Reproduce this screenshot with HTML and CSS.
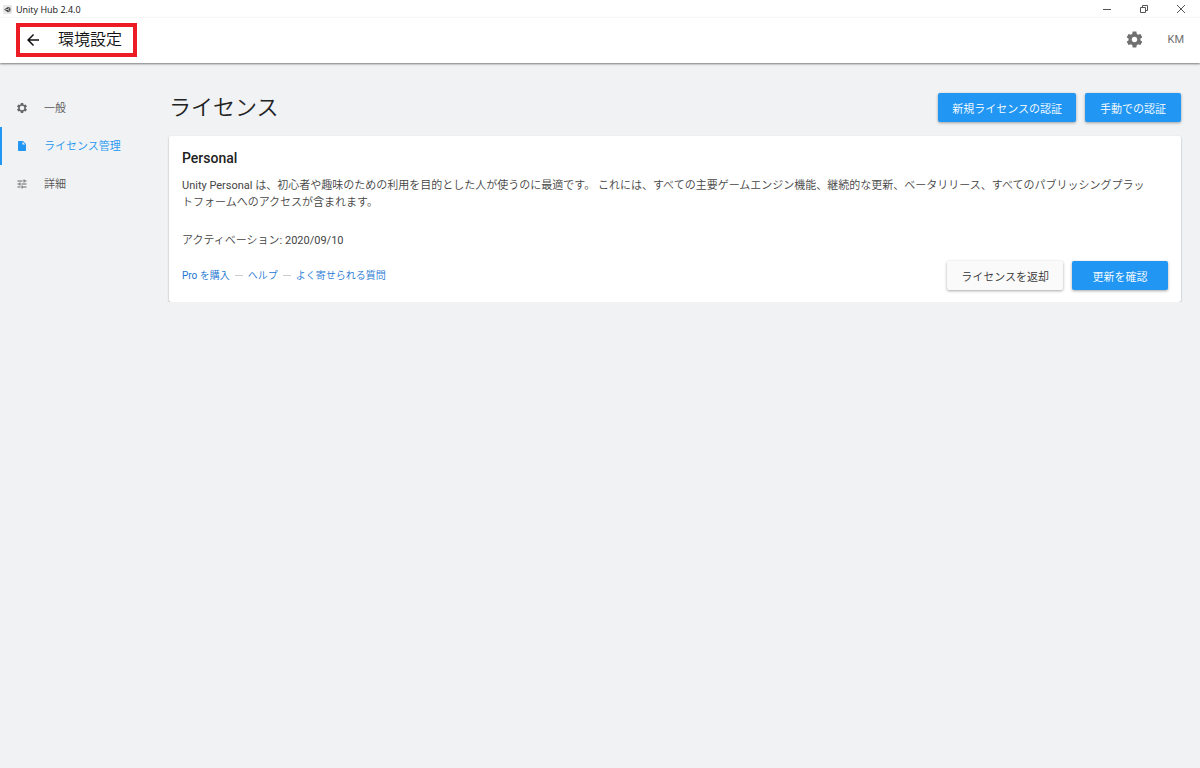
FILE: index.html
```html
<!DOCTYPE html>
<html lang="ja">
<head>
    <meta charset="UTF-8">
    <meta name="viewport" content="width=device-width, initial-scale=1.0">
    <title>Unity Hub 2.4.0</title>
    <link rel="stylesheet" href="styles.css">
</head>
<body>

    <!-- Title bar -->
    <div class="titlebar">
        <svg class="app-icon" viewBox="0 0 24 24">
            <rect width="24" height="24" rx="2" fill="#e8e8e8"/>
            <path d="M3 12 13 5l6 1 1 6-1 6-6 1z" fill="#444"/>
            <path d="M7 12h7M14 12l3-6M14 12l3 6" stroke="#e8e8e8" stroke-width="2"/>
        </svg>
        <span class="app-name">Unity Hub 2.4.0</span>
        <div class="window-controls">
            <button type="button" aria-label="最小化">
                <svg viewBox="0 0 10 10"><path d="M1 5.5h8"/></svg>
            </button>
            <button type="button" aria-label="元に戻す">
                <svg viewBox="0 0 10 10"><path d="M1.5 3.5h5v5h-5zM3.5 3V1.5h5v5H7"/></svg>
            </button>
            <button type="button" aria-label="閉じる">
                <svg viewBox="0 0 10 10"><path d="M1 1l8 8M9 1l-8 8"/></svg>
            </button>
        </div>
    </div>

    <!-- Header -->
    <header class="header">
        <div class="back-box">
            <button type="button" class="back-btn" aria-label="戻る">
                <svg viewBox="0 0 24 24"><path d="M20 11H7.83l5.59-5.59L12 4l-8 8 8 8 1.41-1.41L7.83 13H20v-2z"/></svg>
            </button>
            <span class="header-title">環境設定</span>
        </div>
        <div class="header-right">
            <button type="button" class="gear-btn" aria-label="設定">
                <svg viewBox="0 0 24 24"><path d="M19.43 12.98c.04-.32.07-.64.07-.98s-.03-.66-.07-.98l2.11-1.65c.19-.15.24-.42.12-.64l-2-3.46c-.12-.22-.39-.3-.61-.22l-2.49 1c-.52-.4-1.08-.73-1.69-.98l-.38-2.65C14.46 2.18 14.25 2 14 2h-4c-.25 0-.46.18-.49.42l-.38 2.65c-.61.25-1.17.59-1.69.98l-2.49-1c-.23-.09-.49 0-.61.22l-2 3.46c-.13.22-.07.49.12.64l2.11 1.65c-.04.32-.07.65-.07.98s.03.66.07.98l-2.11 1.65c-.19.15-.24.42-.12.64l2 3.46c.12.22.39.3.61.22l2.49-1c.52.4 1.08.73 1.69.98l.38 2.65c.03.24.24.42.49.42h4c.25 0 .46-.18.49-.42l.38-2.65c.61-.25 1.17-.59 1.69-.98l2.49 1c.23.09.49 0 .61-.22l2-3.46c.12-.22.07-.49-.12-.64l-2.11-1.65zM12 15.5c-1.93 0-3.5-1.57-3.5-3.5s1.57-3.5 3.5-3.5 3.5 1.57 3.5 3.5-1.57 3.5-3.5 3.5z"/></svg>
            </button>
            <button type="button" class="user-btn">KM</button>
        </div>
    </header>

    <div class="layout">
        <!-- Sidebar -->
        <nav class="sidebar">
            <a href="#general">
                <svg viewBox="0 0 24 24"><path fill-rule="evenodd" d="M19.43 12.98c.04-.32.07-.64.07-.98s-.03-.66-.07-.98l2.11-1.65c.19-.15.24-.42.12-.64l-2-3.46c-.12-.22-.39-.3-.61-.22l-2.49 1c-.52-.4-1.08-.73-1.69-.98l-.38-2.65C14.46 2.18 14.25 2 14 2h-4c-.25 0-.46.18-.49.42l-.38 2.65c-.61.25-1.17.59-1.69.98l-2.49-1c-.23-.09-.49 0-.61.22l-2 3.46c-.13.22-.07.49.12.64l2.11 1.65c-.04.32-.07.65-.07.98s.03.66.07.98l-2.11 1.65c-.19.15-.24.42-.12.64l2 3.46c.12.22.39.3.61.22l2.49-1c.52.4 1.08.73 1.69.98l.38 2.65c.03.24.24.42.49.42h4c.25 0 .46-.18.49-.42l.38-2.65c.61-.25 1.17-.59 1.69-.98l2.49 1c.23.09.49 0 .61-.22l2-3.46c.12-.22.07-.49-.12-.64l-2.11-1.65zM12 16.6a4.6 4.6 0 1 1 0-9.2 4.6 4.6 0 0 1 0 9.2z"/></svg>
                一般
            </a>
            <a href="#license" class="active">
                <svg viewBox="0 0 24 24"><path d="M6 2c-1.1 0-1.99.9-1.99 2L4 20c0 1.1.89 2 1.99 2H18c1.1 0 2-.9 2-2V8l-6-6H6zm7 7V3.5L18.5 9H13z"/></svg>
                ライセンス管理
            </a>
            <a href="#advanced">
                <svg viewBox="0 0 24 24"><path d="M3 17v2h6v-2H3zM3 5v2h10V5H3zm10 16v-2h8v-2h-8v-2h-2v6h2zM7 9v2H3v2h4v2h2V9H7zm14 4v-2H11v2h10zm-6-4h2V7h4V5h-4V3h-2v6z"/></svg>
                詳細
            </a>
        </nav>

        <!-- License page -->
        <main class="content">
            <div class="content-head">
                <h1>ライセンス</h1>
                <div class="buttons">
                    <button type="button" class="btn btn-primary">新規ライセンスの認証</button>
                    <button type="button" class="btn btn-primary">手動での認証</button>
                </div>
            </div>

            <section class="card">
                <h2>Personal</h2>
                <p class="description">Unity Personal は、初心者や趣味のための利用を目的とした人が使うのに最適です。 これには、すべての主要ゲームエンジン機能、継続的な更新、ベータリリース、すべてのパブリッシングプラッ<br>トフォームへのアクセスが含まれます。</p>
                <p class="activation">アクティベーション: 2020/09/10</p>
                <div class="card-foot">
                    <div class="links">
                        <a href="#buy">Pro を購入</a>
                        <span class="dash"></span>
                        <a href="#help">ヘルプ</a>
                        <span class="dash"></span>
                        <a href="#faq">よく寄せられる質問</a>
                    </div>
                    <div class="buttons">
                        <button type="button" class="btn">ライセンスを返却</button>
                        <button type="button" class="btn btn-primary">更新を確認</button>
                    </div>
                </div>
            </section>
        </main>
    </div>

</body>
</html>
```
FILE: styles.css
```css
* {
    box-sizing: border-box;
    margin: 0;
    padding: 0;
}

body {
    background-color: #f0f2f4;
    color: #444;
    font-family: Roboto, "Noto Sans CJK JP DemiLight", "Noto Sans CJK JP Light", "Noto Sans CJK JP", sans-serif;
    font-size: 11px;
    line-height: 17px;
}

button {
    border: none;
    background: none;
    font-family: inherit;
    cursor: pointer;
}

a {
    text-decoration: none;
}

/* Title bar */
.titlebar {
    display: flex;
    align-items: center;
    height: 18px;
    padding-left: 3px;
    background-color: #fff;
}

.app-icon {
    width: 9px;
    height: 9px;
    margin-right: 4px;
}

.app-name {
    color: #111;
    font-family: "Open Sans", sans-serif;
    font-size: 9px;
}

.window-controls {
    display: flex;
    margin-left: auto;
    padding-right: 1px;
}

.window-controls button {
    display: flex;
    align-items: center;
    justify-content: center;
    width: 37px;
    height: 18px;
}

.window-controls svg {
    width: 10px;
    height: 10px;
    fill: none;
    stroke: #555;
    stroke-width: 1;
}

/* Header */
.header {
    display: flex;
    align-items: center;
    justify-content: space-between;
    height: 45px;
    padding: 0 12px 2px 16px;
    background-color: #fff;
    box-shadow: 0 1px 2px rgba(0, 0, 0, 0.5);
}

.back-box {
    display: flex;
    align-items: center;
    width: 121px;
    height: 34px;
    padding-left: 4px;
    border: 4px solid #ed1c24;
}

.back-btn {
    display: flex;
    margin-right: 16px;
}

.back-btn svg {
    width: 18px;
    height: 18px;
    fill: #111;
}

.header-title {
    color: #111;
    font-size: 16px;
}

.header-right {
    display: flex;
    align-items: center;
    gap: 19px;
}

.gear-btn {
    display: flex;
}

.gear-btn svg {
    width: 19px;
    height: 19px;
    fill: #707070;
}

.user-btn {
    padding: 0 4px;
    color: #707070;
    font-size: 11px;
}

/* Sidebar */
.layout {
    display: flex;
}

.sidebar {
    flex: 0 0 169px;
    padding-top: 26px;
}

.sidebar a {
    display: flex;
    align-items: center;
    height: 38px;
    padding-left: 14px;
    border-left: 2px solid transparent;
    color: #555;
}

.sidebar svg {
    width: 12px;
    height: 12px;
    margin-right: 16px;
    fill: #666;
}

.sidebar .active {
    border-left-color: #2196f3;
    color: #2196f3;
}

.sidebar .active svg {
    fill: #2196f3;
}

/* Content */
.content {
    flex: 1;
    min-width: 0;
    padding: 28px 19px 0 0;
}

.content-head {
    display: flex;
    align-items: center;
    justify-content: space-between;
    margin-bottom: 12px;
}

h1 {
    color: #222;
    font-size: 22px;
    font-weight: 400;
    line-height: 33px;
}

.buttons {
    display: flex;
    gap: 9px;
}

.btn {
    min-width: 96px;
    height: 29px;
    padding: 0 14px;
    border-radius: 2px;
    background-color: #fafafa;
    color: #333;
    font-size: 11px;
    box-shadow: 0 1px 3px rgba(0, 0, 0, 0.35);
}

.btn-primary {
    background-color: #2196f3;
    color: #fff;
}

/* Card */
.card {
    padding: 12px 13px;
    border-radius: 2px;
    background-color: #fff;
    box-shadow: 0 1px 2px rgba(0, 0, 0, 0.35);
}

h2 {
    margin-bottom: 9px;
    color: #222;
    font-size: 14px;
    font-weight: 500;
    line-height: 20px;
}

.description {
    margin-bottom: 21px;
}

.activation {
    margin-bottom: 12px;
}

.card-foot {
    display: flex;
    align-items: center;
    justify-content: space-between;
}

.links {
    display: flex;
    align-items: center;
    gap: 5px;
}

.links a {
    color: #1976d2;
    font-size: 10px;
}

.dash {
    width: 8px;
    height: 1px;
    background-color: #ccc;
}
```
